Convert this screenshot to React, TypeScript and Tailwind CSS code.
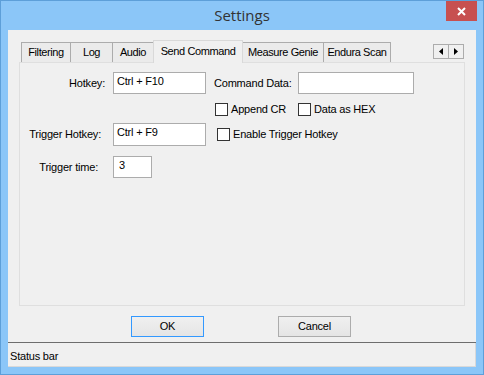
const tabs = [
  { label: 'Filtering', w: 'w-[50px]' },
  { label: 'Log', w: 'w-[43px]' },
  { label: 'Audio', w: 'w-[42px]' },
  { label: 'Send Command', w: 'w-[90px]', active: true },
  { label: 'Measure Genie', w: 'w-[82px]' },
  { label: 'Endura Scan', w: 'w-[68px]' },
]

const TextBox = ({ value, className }: { value?: string; className: string }) => (
  <div
    className={`${className} bg-white border border-[#acacac] pl-[3px] pt-[2px] leading-[13px] whitespace-nowrap`}
  >
    {value}
  </div>
)

const CheckBox = ({ label, className }: { label: string; className?: string }) => (
  <div className={`flex items-center gap-[3px] ${className ?? ''}`}>
    <span className="w-[13px] h-[13px] border border-[#333] bg-white shrink-0" />
    <span className="whitespace-nowrap">{label}</span>
  </div>
)

const App = () => {
  return (
    <div className="w-[484px] h-[375px] flex flex-col bg-[#8bc6f8] border border-[#5d9fd9] font-['Liberation_Sans',Arial,sans-serif] text-[11px] tracking-[-0.2px] text-black">
      {/* title bar */}
      <div className="h-[29px] grid grid-cols-[1fr_auto_1fr] items-start">
        <div />
        <div className="font-['Open_Sans',sans-serif] text-[15px] tracking-normal leading-[28px] text-[#333]">
          Settings
        </div>
        <div className="flex justify-end pr-[6px]">
          <div className="w-[31px] h-[20px] bg-[#c75050] flex items-center justify-center">
            <svg width="9" height="9" viewBox="0 0 9 9">
              <path d="M1 1 L8 8 M8 1 L1 8" stroke="white" strokeWidth="2" />
            </svg>
          </div>
        </div>
      </div>

      {/* client area */}
      <div className="mx-[7px] h-[337px] bg-[#f0f0f0] flex flex-col">
        <div className="ml-[11px] w-[446px] pt-[10px]">
          {/* tab row */}
          <div className="flex h-[22px] items-end pl-[2px] tracking-[-0.4px]">
            {tabs.map((t) =>
              t.active ? (
                <div
                  key={t.label}
                  className={`${t.w} relative z-10 h-[23px] -mb-px -mr-px bg-[#f0f0f0] border border-b-0 border-[#d9d9d9] text-center leading-[20px] whitespace-nowrap`}
                >
                  {t.label}
                </div>
              ) : (
                <div
                  key={t.label}
                  className={`${t.w} h-[20px] -mr-px bg-[#ebebeb] border border-b-0 border-[#acacac] text-center leading-[19px] whitespace-nowrap`}
                >
                  {t.label}
                </div>
              )
            )}
            <div className="ml-auto mr-px self-start mt-[4px] flex">
              <div className="w-[16px] h-[15px] -mr-px border border-[#acacac] bg-[#f0f0f0] flex items-center justify-center">
                <svg width="4" height="7" viewBox="0 0 4 7">
                  <polygon points="4,0 4,7 0,3.5" fill="#000" />
                </svg>
              </div>
              <div className="w-[16px] h-[15px] border border-[#acacac] bg-[#f0f0f0] flex items-center justify-center">
                <svg width="4" height="7" viewBox="0 0 4 7">
                  <polygon points="0,0 0,7 4,3.5" fill="#000" />
                </svg>
              </div>
            </div>
          </div>

          {/* tab panel */}
          <div className="h-[244px] border border-[#dfdfdf] flex flex-col pt-[9px]">
            <div className="flex h-[22px]">
              <div className="w-[194px] flex items-center">
                <span className="w-[85px] text-right">Hotkey:</span>
                <TextBox value="Ctrl + F10" className="ml-[8px] w-[93px] h-[22px]" />
              </div>
              <div className="flex items-center">
                <span className="w-[84px] whitespace-nowrap">Command Data:</span>
                <TextBox className="w-[116px] h-[22px]" />
              </div>
            </div>

            <div className="flex h-[14px] mt-[8px] pl-[195px]">
              <CheckBox label="Append CR" className="w-[83px]" />
              <CheckBox label="Data as HEX" />
            </div>

            <div className="flex h-[23px] mt-[7px]">
              <div className="w-[194px] flex items-center">
                <span className="w-[81px] text-right whitespace-nowrap">Trigger Hotkey:</span>
                <TextBox value="Ctrl + F9" className="ml-[12px] w-[93px] h-[23px]" />
              </div>
              <CheckBox label="Enable Trigger Hotkey" className="pl-[3px] gap-[2px]" />
            </div>

            <div className="flex h-[22px] mt-[10px] items-center">
              <span className="w-[78px] text-right whitespace-nowrap">Trigger time:</span>
              <TextBox value="3" className="ml-[15px] w-[39px] h-[22px] pl-[5px]" />
            </div>
          </div>
        </div>

        {/* buttons */}
        <div className="mt-[10px] h-[21px] flex justify-center gap-[74px] pr-[2px]">
          <button className="w-[73px] h-[21px] border border-[#3399ff] bg-gradient-to-b from-[#f0f0f0] to-[#e5e5e5] text-[11px]">
            OK
          </button>
          <button className="w-[73px] h-[21px] border border-[#acacac] bg-gradient-to-b from-[#f0f0f0] to-[#e5e5e5] text-[11px]">
            Cancel
          </button>
        </div>

        {/* status bar */}
        <div className="mt-[5px] h-px bg-[#6d6d6d]" />
        <div className="flex-1 flex items-center pt-[3px] pl-[2px] border-r border-b border-[#d9d9d9]">
          Status bar
        </div>
      </div>
    </div>
  )
}

export default App
